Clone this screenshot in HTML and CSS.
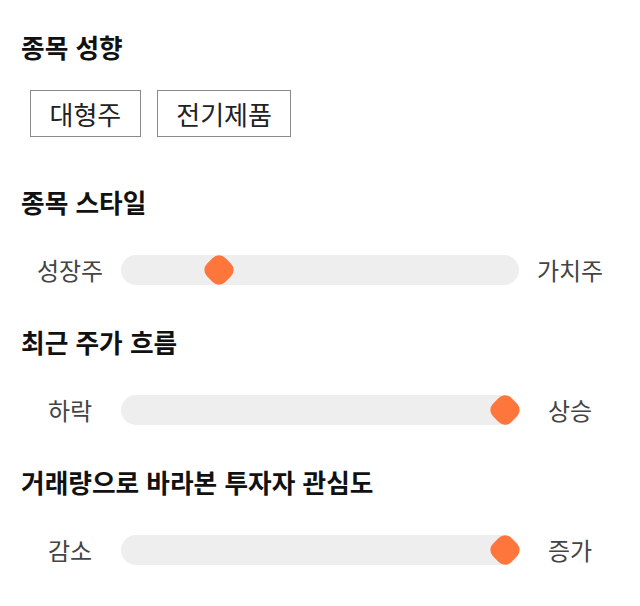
FILE: index.html
```html
<!DOCTYPE html>
<html lang="ko">
<head>
    <meta charset="UTF-8">
    <meta name="viewport" content="width=device-width, initial-scale=1.0">
    <title>종목 성향</title>
    <link rel="stylesheet" href="styles.css">
</head>
<body>
    <div class="panel">
        <section class="block">
            <h2 class="title title-tags">종목 성향</h2>
            <div class="tags">
                <span class="tag">대형주</span>
                <span class="tag">전기제품</span>
            </div>
        </section>

        <section class="block block-first">
            <h2 class="title">종목 스타일</h2>
            <div class="scale">
                <span class="scale-label">성장주</span>
                <div class="track">
                    <span class="thumb" style="left: 24.6%"></span>
                </div>
                <span class="scale-label">가치주</span>
            </div>
        </section>

        <section class="block">
            <h2 class="title">최근 주가 흐름</h2>
            <div class="scale">
                <span class="scale-label">하락</span>
                <div class="track">
                    <span class="thumb" style="left: 96.5%"></span>
                </div>
                <span class="scale-label">상승</span>
            </div>
        </section>

        <section class="block">
            <h2 class="title">거래량으로 바라본 투자자 관심도</h2>
            <div class="scale">
                <span class="scale-label">감소</span>
                <div class="track">
                    <span class="thumb" style="left: 96.5%"></span>
                </div>
                <span class="scale-label">증가</span>
            </div>
        </section>
    </div>
</body>
</html>
```

FILE: styles.css
```css
body {
    margin: 0;
    background: #ffffff;
    font-family: "Noto Sans CJK KR", "Noto Sans", sans-serif;
    color: #222;
}
.panel {
    padding: 30px 0 0 21px;
}
.block {
    margin-bottom: 40px;
}
.block:first-child {
    margin-bottom: 48px;
}
.title {
    margin: 0 0 36px;
    font-size: 25.7px;
    line-height: 34px;
    font-weight: 700;
    color: #111;
}
.title-tags {
    margin-bottom: 26px;
}
.tags {
    display: flex;
    gap: 16px;
    padding-left: 9px;
}
.tag {
    border: 1px solid #8a8a8a;
    padding: 0 18.5px;
    font-size: 26px;
    line-height: 45px;
    color: #222;
}
.scale {
    display: flex;
    align-items: center;
    gap: 11px;
    padding-left: 9px;
}
.scale-label {
    width: 80px;
    text-align: center;
    font-size: 24px;
    line-height: 30px;
    color: #444;
}
.track {
    position: relative;
    width: 398px;
    height: 30px;
    border-radius: 15px;
    background: #eeeeee;
}
.thumb {
    position: absolute;
    top: 50%;
    width: 26px;
    height: 26px;
    margin: -13px 0 0 -13px;
    border-radius: 9px;
    background: #ff763d;
    transform: rotate(45deg);
}
```
